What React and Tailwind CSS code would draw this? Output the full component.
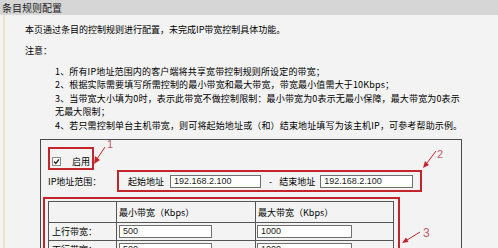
const RED = "border-[#c4242c]";

function Field({ value, w }) {
  return (
    <div
      className={`${w} h-[13px] bg-white border border-[#6f6f6f] pl-[3px] text-[9px] leading-[11px] text-[#222] font-['Liberation_Sans',sans-serif]`}
    >
      {value}
    </div>
  );
}

function Check() {
  return (
    <svg width="9" height="9" viewBox="0 0 9 9" className="shrink-0">
      <rect x="0.5" y="0.5" width="8" height="8" fill="#fff" stroke="#8c8c8c" />
      <path d="M2 4.5 L3.8 6.4 L7 2.4" fill="none" stroke="#222" strokeWidth="1.4" />
    </svg>
  );
}

export default function App() {
  const cell = "border border-[#555]";
  return (
    <div className="relative w-[498px] h-[248px] overflow-hidden bg-[#f3f3f3] text-[#000] font-['Noto_Sans_CJK_SC',sans-serif]">
      <div className="h-[15px] bg-[#d6d6d6] pl-[2px] text-[10px] leading-[15px] text-[#222]">
        条目规则配置
      </div>

      <div className="ml-[3px] h-[233px] border-l-[2px] border-[#e8e4c2]">
        <div className="pl-[20px] pt-[8px] text-[9px] leading-[13px] whitespace-nowrap">
          <div>本页通过条目的控制规则进行配置，未完成IP带宽控制具体功能。</div>
          <div className="mt-[8px]">注意：</div>

          {/* notes */}
          <div className="mt-[8px] pl-[30px] leading-[13.4px] tracking-[0.15px]">
            <div>1、所有IP地址范围内的客户端将共享宽带控制规则所设定的带宽；</div>
            <div>2、根据实际需要填写所需控制的最小带宽和最大带宽，带宽最小值需大于10Kbps；</div>
            <div>3、当带宽大小填为0时，表示此带宽不做控制限制：最小带宽为0表示无最小保障，最大带宽为0表示</div>
            <div>无最大限制；</div>
            <div>4、若只需控制单台主机带宽，则可将起始地址或（和）结束地址填写为该主机IP，可参考帮助示例。</div>
          </div>

          {/* rule box */}
          <div className="mt-[7px] ml-[15px] w-[422px] h-[120px] border border-[#4a4a4a]">
            <div className={`mt-[7px] ml-[7px] w-[46px] h-[23px] border-2 ${RED} flex items-center gap-[11px] pl-[2px] pt-[5px]`}>
              <Check />
              <span>启用</span>
            </div>

            <div className="flex items-center">
              <span className="ml-[7px] w-[69px]">IP地址范围：</span>
              <div className={`w-[305px] h-[22px] border-2 ${RED} flex items-center pl-[9px]`}>
                <span>起始地址</span>
                <div className="ml-[6px]">
                  <Field value="192.168.2.100" w="w-[91px]" />
                </div>
                <span className="ml-[8px]">-</span>
                <span className="ml-[7px]">结束地址</span>
                <div className="ml-[5px]">
                  <Field value="192.168.2.100" w="w-[93px]" />
                </div>
              </div>
            </div>

            <div className={`mt-[5px] ml-[2px] w-[357px] h-[60px] border-2 ${RED} pl-[3px] pt-[2px]`}>
              <table className="w-[346px] border-collapse">
                <tbody>
                  <tr className="h-[21px]">
                    <td className={`${cell} w-[68px]`}></td>
                    <td className={`${cell} w-[139px] pl-[2px]`}>最小带宽（Kbps）</td>
                    <td className={`${cell} pl-[2px]`}>最大带宽（Kbps）</td>
                  </tr>
                  <tr className="h-[18px]">
                    <td className={`${cell} pl-[3px]`}>上行带宽：</td>
                    <td className={`${cell} pl-[2px]`}>
                      <Field value="500" w="w-[93px]" />
                    </td>
                    <td className={`${cell} pl-[1px]`}>
                      <Field value="1000" w="w-[95px]" />
                    </td>
                  </tr>
                  <tr className="h-[18px]">
                    <td className={`${cell} pl-[3px]`}>下行带宽：</td>
                    <td className={`${cell} pl-[2px]`}>
                      <Field value="500" w="w-[93px]" />
                    </td>
                    <td className={`${cell} pl-[1px]`}>
                      <Field value="1000" w="w-[95px]" />
                    </td>
                  </tr>
                </tbody>
              </table>
            </div>
          </div>
        </div>
      </div>

      {/* annotation arrows */}
      <svg className="absolute inset-0 pointer-events-none" width="498" height="248">
        <g stroke="#c4242c" strokeWidth="1" fill="none">
          <line x1="105" y1="147" x2="97" y2="159" />
          <line x1="436" y1="151" x2="427" y2="163" />
          <line x1="420" y1="232" x2="407" y2="240" />
        </g>
        <g fill="#c4242c">
          <polygon points="94,164 100,160 95,156" />
          <polygon points="423,168 429,165 425,161" />
          <polygon points="402,243 408.5,242 406,237.5" />
        </g>
      </svg>
      <span className="absolute left-[107px] top-[139px] text-[11px] leading-[11px] text-[#b9606a] font-['Liberation_Sans',sans-serif]">1</span>
      <span className="absolute left-[437px] top-[149px] text-[11px] leading-[11px] text-[#b9606a] font-['Liberation_Sans',sans-serif]">2</span>
      <span className="absolute left-[423px] top-[227px] text-[12px] leading-[12px] text-[#b9606a] font-['Liberation_Sans',sans-serif]">3</span>
    </div>
  );
}
